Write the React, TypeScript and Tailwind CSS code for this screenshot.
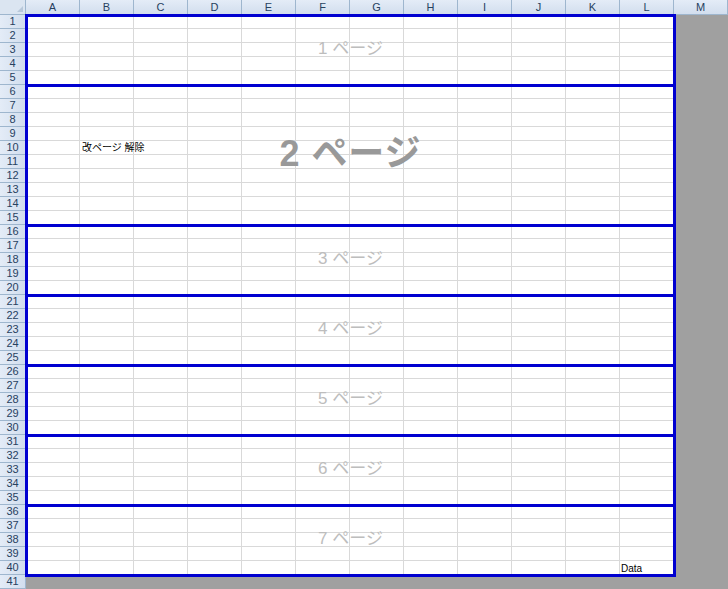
const COLS = ["A", "B", "C", "D", "E", "F", "G", "H", "I", "J", "K", "L", "M"];
const ROWS = Array.from({ length: 41 }, (_, i) => i + 1);

// page ranges (first row, last row)
const PAGES = [
	{ n: 1, from: 1, to: 5 },
	{ n: 2, from: 6, to: 15 },
	{ n: 3, from: 16, to: 20 },
	{ n: 4, from: 21, to: 25 },
	{ n: 5, from: 26, to: 30 },
	{ n: 6, from: 31, to: 35 },
	{ n: 7, from: 36, to: 40 },
];

const rowTop = (r: number) => 15 + (r - 1) * 14;

export default function App() {
	return (
		<div
			className="relative w-[728px] h-[589px] overflow-hidden bg-[#a0a0a0]"
			style={{ fontFamily: '"MS PGothic", "Liberation Sans", "Noto Sans CJK JP", sans-serif' }}
		>
			<div className="grid grid-cols-[26px_repeat(13,54px)] grid-rows-[15px_repeat(41,14px)]">
				{/* corner */}
				<div className="bg-[#dbe5f1] border-r border-b border-[#9eb6ce] relative">
					<span className="absolute right-[2px] bottom-[2px] w-0 h-0 border-l-[6px] border-l-transparent border-b-[6px] border-b-[#b8c8da]" />
				</div>
				{COLS.map((c) => (
					<div
						key={c}
						className="bg-gradient-to-b from-[#e4ecf7] to-[#d2deee] border-r border-b border-[#9eb6ce] text-[11px] leading-[14px] text-center text-[#27415f]"
					>
						{c}
					</div>
				))}
				{ROWS.map((r) => (
					<div key={r} className="contents">
						<div className="bg-gradient-to-r from-[#e4ecf7] to-[#d2deee] border-r border-b border-[#9eb6ce] text-[11px] leading-[13px] text-center text-[#27415f]">
							{r}
						</div>
						{COLS.map((c) =>
							c === "M" || r === 41 ? (
								<div key={c} className="bg-[#a0a0a0]" />
							) : (
								<div key={c} className="bg-white border-r border-b border-[#d9d9d9]" />
							),
						)}
					</div>
				))}
			</div>

			{/* page break overlay */}
			{PAGES.map((p) => {
				const top = rowTop(p.from);
				const h = (p.to - p.from + 1) * 14;
				return (
					<div
						key={p.n}
						className="absolute left-[25px] w-[651px] border-[3px] border-[#0000d0] flex items-center justify-center pointer-events-none"
						style={{ top: top - 1, height: h + 3 }}
					>
						{p.n === 2 ? (
							<span className="text-[36px] font-semibold text-[#999999] mt-[-4px] tracking-wide">2 ページ</span>
						) : (
							<span className="text-[17px] text-[#bdbdbd] mt-[-4px]">{p.n} ページ</span>
						)}
					</div>
				);
			})}

			<span className="absolute left-[82px] top-[142px] text-[10px] leading-[12px] text-black">改ページ 解除</span>
			<span className="absolute left-[621px] top-[563px] text-[10px] leading-[12px] text-black">Data</span>
		</div>
	);
}
